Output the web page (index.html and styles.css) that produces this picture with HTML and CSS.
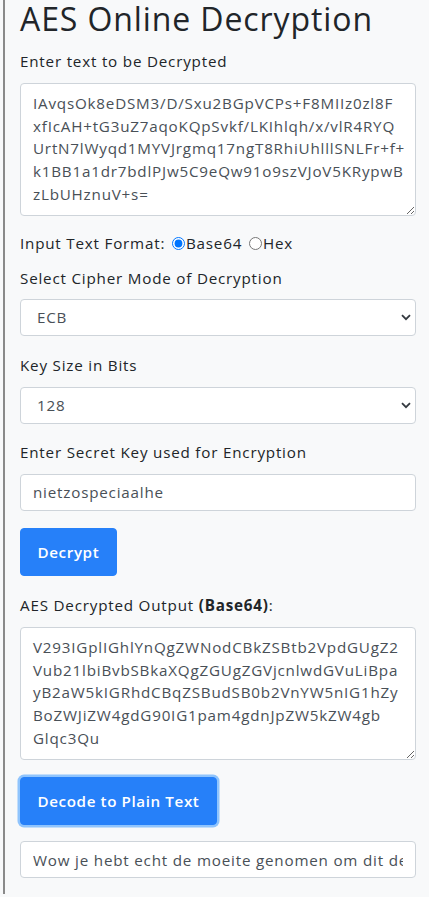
FILE: index.html
```html
<!DOCTYPE html>
<html lang="en">
<head>
<meta charset="utf-8">
<title>AES Online Decryption</title>
<link rel="stylesheet" href="styles.css">
</head>
<body>
<div class="panel">
  <h1 class="title">AES Online Decryption</h1>

  <div class="group">
    <label class="label" for="cipher">Enter text to be Decrypted</label>
    <textarea id="cipher" class="control area">IAvqsOk8eDSM3/D/Sxu2BGpVCPs+F8MIIz0zl8F
xfIcAH+tG3uZ7aqoKQpSvkf/LKIhlqh/x/vlR4RYQ
UrtN7lWyqd1MYVJrgmq17ngT8RhiUhlllSNLFr+f+
k1BB1a1dr7bdlPJw5C9eQw91o9szVJoV5KRypwB
zLbUHznuV+s=</textarea>
  </div>

  <div class="format">
    <span>Input Text Format: </span><input type="radio" name="fmt" id="b64" class="radio" checked><label for="b64">Base64</label> <input type="radio" name="fmt" id="hex" class="radio"><label for="hex">Hex</label>
  </div>

  <div class="group">
    <label class="label" for="mode">Select Cipher Mode of Decryption</label>
    <div class="select-wrap">
      <select id="mode" class="control select">
        <option>ECB</option>
        <option>CBC</option>
      </select>
      <svg class="chev" width="10" height="7" viewBox="0 0 10 7"><path d="M1 1.2 L5 5.2 L9 1.2" fill="none" stroke="#343a40" stroke-width="1.8"/></svg>
    </div>
  </div>

  <div class="group">
    <label class="label" for="size">Key Size in Bits</label>
    <div class="select-wrap">
      <select id="size" class="control select">
        <option>128</option>
        <option>192</option>
        <option>256</option>
      </select>
      <svg class="chev" width="10" height="7" viewBox="0 0 10 7"><path d="M1 1.2 L5 5.2 L9 1.2" fill="none" stroke="#343a40" stroke-width="1.8"/></svg>
    </div>
  </div>

  <div class="group">
    <label class="label" for="key">Enter Secret Key used for Encryption</label>
    <input id="key" class="control input" type="text" value="nietzospeciaalhe">
  </div>

  <div class="group">
    <button class="btn">Decrypt</button>
  </div>

  <div class="group">
    <label class="label" for="out">AES Decrypted Output <b>(Base64)</b>:</label>
    <textarea id="out" class="control area">V293IGplIGhlYnQgZWNodCBkZSBtb2VpdGUgZ2
Vub21lbiBvbSBkaXQgZGUgZGVjcnlwdGVuLiBpa
yB2aW5kIGRhdCBqZSBudSB0b2VnYW5nIG1hZy
BoZWJiZW4gdG90IG1pam4gdnJpZW5kZW4gb
Glqc3Qu</textarea>
  </div>

  <div class="group last">
    <button class="btn focus">Decode to Plain Text</button>
  </div>

  <input class="control input" type="text" value="Wow je hebt echt de moeite genomen om dit de decrypten. ik vind dat je nu toegang mag hebben tot mijn vrienden lijst.">
</div>
</body>
</html>
```

FILE: styles.css
```css
* { box-sizing: border-box; }

html, body {
  margin: 0;
  background: #f8f9fa;
}

body {
  font-family: "Open Sans", "Liberation Sans", sans-serif;
  color: #212529;
  font-size: 15.2px;
  line-height: 1.5;
  letter-spacing: 0.8px;
}

.panel {
  margin-left: 3px;
  border-left: 2px solid #8a8a8a;
  padding: 0 13px 15px 15px;
  min-height: 894px;
}

.title {
  margin: 0 0 12px;
  font-size: 32px;
  font-weight: 500;
  line-height: 38px;
  letter-spacing: 0.9px;
}

.group {
  margin-bottom: 17.5px;
}

.group.last {
  margin-bottom: 16px;
}

.label {
  display: block;
  margin-bottom: 10px;
}

.control {
  display: block;
  width: 100%;
  font-family: inherit;
  font-size: 15.2px;
  line-height: 22.8px;
  letter-spacing: 0.8px;
  color: #495057;
  background: #fff;
  border: 1px solid #ced4da;
  border-radius: 4px;
}

.area {
  height: 133px;
  padding: 8px 4px 8px 12px;
  resize: vertical;
  overflow: hidden;
  white-space: pre;
}

.format {
  margin: -1.5px 0 12px;
}

.radio {
  margin: 0 1px 0 2px;
  width: 13px;
  height: 13px;
  vertical-align: -1px;
}

.select-wrap {
  position: relative;
}

.select {
  height: 37px;
  padding: 6px 16px;
  appearance: none;
  -webkit-appearance: none;
}

.chev {
  position: absolute;
  right: 5px;
  top: 15px;
  pointer-events: none;
}

.input {
  height: 37px;
  padding: 6px 12px;
}

.btn {
  display: inline-block;
  font-family: inherit;
  font-size: 15.2px;
  font-weight: 600;
  line-height: 22.8px;
  letter-spacing: 0.6px;
  color: #fff;
  background: #2680f9;
  border: 1px solid #2680f9;
  border-radius: 4px;
  padding: 11.6px 16.5px;
}

.focus {
  box-shadow: 0 0 0 2.5px rgba(38, 143, 255, 0.5);
}

b { font-weight: 700; }
```
